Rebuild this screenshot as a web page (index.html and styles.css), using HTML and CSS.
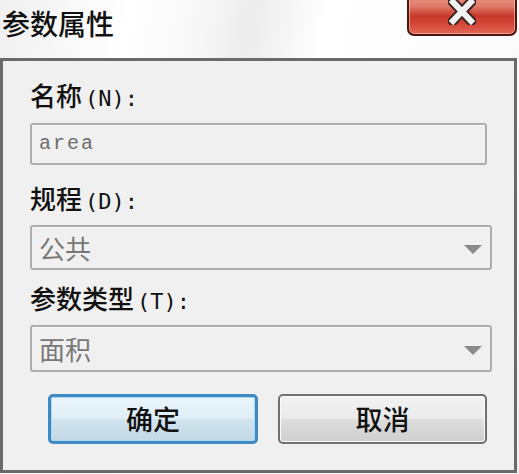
FILE: index.html
```html
<!DOCTYPE html>
<html lang="zh">
<head>
<meta charset="utf-8">
<title>参数属性</title>
<link rel="stylesheet" href="styles.css">
</head>
<body>
<div class="window">
  <div class="titlebar">
    <span class="title">参数属性</span>
    <button class="close" aria-label="关闭">
      <svg width="28" height="26" viewBox="0 0 28 26">
        <path d="M5 3 L23 22 M23 3 L5 22" stroke="#402424" stroke-width="10" stroke-linecap="square" fill="none"/>
        <path d="M5 3 L23 22 M23 3 L5 22" stroke="#f2f2f2" stroke-width="6" stroke-linecap="square" fill="none"/>
      </svg>
    </button>
  </div>
  <div class="client">
    <div class="label l1">名称<span class="acc">(N):</span></div>
    <div class="textbox">area</div>
    <div class="label l2">规程<span class="acc">(D):</span></div>
    <div class="combo c1"><span>公共</span><i class="arrow"></i></div>
    <div class="label l3">参数类型<span class="acc">(T):</span></div>
    <div class="combo c2"><span>面积</span><i class="arrow"></i></div>
    <div class="buttons">
      <button class="btn ok">确定</button>
      <button class="btn cancel">取消</button>
    </div>
  </div>
</div>
</body>
</html>
```
FILE: styles.css
```css
* { box-sizing: border-box; }
html, body { margin: 0; padding: 0; }
body {
  width: 519px;
  height: 474px;
  overflow: hidden;
  font-family: "Noto Sans CJK SC", "Liberation Sans", sans-serif;
  background: #ffffff;
}
.window {
  width: 519px;
  height: 474px;
  display: flex;
  flex-direction: column;
  background: linear-gradient(170deg, #ffffff 0%, #fbfbfb 40%, #f0f0f0 100%);
}
.titlebar {
  height: 58px;
  position: relative;
  background: linear-gradient(100deg, #f0f0f0 0%, #ffffff 25%, #f6f6f6 40%, #ececec 48%, #ffffff 62%, #fafafa 100%);
}
.title {
  position: absolute;
  left: 2px;
  top: 4px;
  font-size: 28px;
  line-height: 38px;
  color: #111;
  font-weight: 500;
}
.close {
  position: absolute;
  left: 407px;
  top: -8px;
  width: 110px;
  height: 44px;
  padding: 0;
  border: 2px solid #4a1810;
  border-radius: 0 0 7px 7px;
  background: linear-gradient(180deg, #e89484 0%, #e07c6c 30%, #c8382a 55%, #d44838 75%, #e26656 100%);
  box-shadow: inset 0 0 0 1px rgba(255,200,190,0.6);
  display: flex;
  align-items: flex-start;
  justify-content: center;
  padding-top: 5px;
}
.client {
  flex: 1;
  margin-right: 2px;
  margin-bottom: 1px;
  border: 3px solid #6a6a6a;
  background: #f0f0f0;
  display: flex;
  flex-direction: column;
  padding-left: 27px;
}
.label {
  height: 30px;
  font-size: 26px;
  line-height: 30px;
  color: #111;
  font-weight: 500;
}
.acc {
  font-family: "DejaVu Sans Mono", monospace;
  font-size: 22px;
  font-weight: normal;
  margin-left: 3px;
}
.l1 { margin-top: 19px; }
.l2 { margin-top: 18px; }
.l3 { margin-top: 13px; }
.textbox {
  margin-top: 13px;
  width: 457px;
  height: 42px;
  border: 2px solid #adadad;
  border-radius: 3px;
  background: #f0f0f0;
  color: #6d6d6d;
  font-family: "Liberation Mono", monospace;
  font-size: 20px;
  letter-spacing: 2px;
  line-height: 38px;
  padding-left: 7px;
  box-shadow: inset 0 1px 0 #fafafa;
}
.combo {
  margin-top: 12px;
  width: 462px;
  border: 2px solid #adadad;
  border-radius: 3px;
  background: #f0f0f0;
  color: #777777;
  font-size: 26px;
  padding-left: 7px;
  padding-right: 8px;
  display: flex;
  align-items: center;
  justify-content: space-between;
  box-shadow: inset 0 1px 0 #fafafa;
}
.c1 { height: 45px; }
.c2 { height: 47px; }
.arrow {
  width: 0;
  height: 0;
  border-left: 9px solid transparent;
  border-right: 9px solid transparent;
  border-top: 9px solid #8a8a8a;
  margin-top: 4px;
}
.buttons {
  margin-top: 22px;
  display: flex;
  gap: 20px;
  padding-left: 18px;
}
.btn {
  width: 210px;
  height: 50px;
  font-family: "Noto Sans CJK SC", sans-serif;
  font-size: 27px;
  font-weight: 500;
  color: #111;
  border-radius: 5px;
  padding: 0;
  line-height: 44px;
}
.ok {
  border: 3px solid #3f8ac0;
  background: linear-gradient(180deg, #eaf5fb 0%, #e0eff7 48%, #d0e3ee 52%, #c4d9e5 100%);
  box-shadow: inset 0 0 0 1px #a8d8f2;
}
.cancel {
  width: 209px;
  border: 2px solid #707070;
  background: linear-gradient(180deg, #f2f2f2 0%, #ebebeb 48%, #dddddd 52%, #cfcfcf 100%);
  box-shadow: inset 0 0 0 1px #fbfbfb;
}
```
